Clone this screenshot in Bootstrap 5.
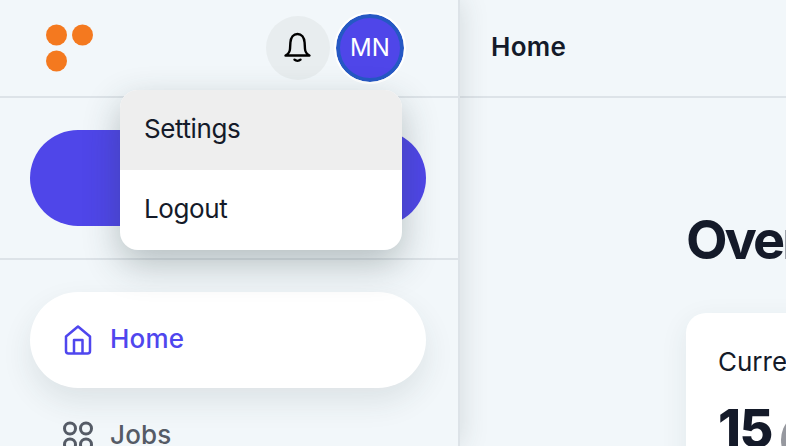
<!DOCTYPE html>
<html lang="en">
<head>
  <meta charset="UTF-8">
  <meta name="viewport" content="width=device-width, initial-scale=1.0">
  <title>Home</title>
  <link href="https://cdn.jsdelivr.net/npm/bootstrap@5.3.0/dist/css/bootstrap.min.css" rel="stylesheet">
  <style>
    html, body {
      height: 100%;
      overflow: hidden;
    }
    body {
      background-color: #f2f7fa;
      font-family: Inter, "Liberation Sans", sans-serif;
      color: #141a29;
    }
    .app-shell {
      width: 786px;
      height: 446px;
      overflow: hidden;
    }
    .side-panel {
      width: 460px;
      flex: none;
      background-color: #f2f7fa;
      border-right: 2px solid #dde3e8;
      box-shadow: 2px 0 26px rgba(40, 60, 60, 0.14);
      position: relative;
      z-index: 2;
    }
    .side-top {
      height: 98px;
      padding: 14px 54px 0 46px;
      border-bottom: 2px solid #dde3e8;
    }
    .logo-mark {
      margin-top: 10px;
    }
    .bell-btn {
      width: 64px;
      height: 64px;
      margin-top: 2px;
      background-color: #e8edef;
    }
    .avatar-btn {
      width: 68px;
      height: 68px;
      margin-left: 6px;
      font-size: 24px;
      color: #fff;
      background-color: #4f46e9;
      border: 4px solid #2558c4;
      outline: 2px solid #fff;
      padding: 0;
    }
    .avatar-btn:hover, .avatar-btn:focus {
      color: #fff;
      background-color: #4f46e9;
      border-color: #2558c4;
    }
    .profile-menu {
      position: absolute;
      top: 90px;
      left: 120px;
      width: 282px;
      padding: 0;
      border: 0;
      border-radius: 18px;
      overflow: hidden;
      box-shadow: 0 14px 36px rgba(40, 60, 60, 0.3);
      z-index: 5;
    }
    .profile-menu .dropdown-item {
      height: 80px;
      padding: 0 24px 4px;
      display: flex;
      align-items: center;
      font-size: 26px;
      letter-spacing: -0.4px;
      color: #141a29;
    }
    .profile-menu .dropdown-item.is-hover {
      background-color: #eeeeee;
    }
    .action-zone {
      height: 162px;
      padding: 32px 32px 0 30px;
      border-bottom: 2px solid #dde3e8;
    }
    .post-btn {
      height: 96px;
      width: 100%;
      border-radius: 48px;
      background-color: #4f46e9;
      border: 0;
    }
    .side-links {
      padding: 32px 32px 0 30px;
    }
    .side-link {
      height: 96px;
      padding: 0 32px;
      border-radius: 48px;
      font-size: 26px;
      font-weight: 500;
      letter-spacing: 0.2px;
      gap: 16px;
      color: #555b66;
      text-decoration: none;
    }
    .side-link svg {
      flex: none;
    }
    .link-text {
      margin-bottom: 4px;
    }
    .side-link.is-active {
      background-color: #fff;
      color: #4f46ee;
      box-shadow: 0 14px 30px rgba(40, 60, 60, 0.1);
    }
    .page-top {
      height: 98px;
      padding: 0 0 4px 31px;
      border-bottom: 2px solid #dde3e8;
      font-size: 26px;
      font-weight: 600;
      letter-spacing: 0.3px;
    }
    .page-body {
      padding: 112px 0 0 226px;
    }
    .page-title {
      font-size: 54px;
      font-weight: 700;
      letter-spacing: -3px;
      line-height: 60px;
      margin: 0 0 43px 0;
      white-space: nowrap;
    }
    .stat-box {
      width: 400px;
      border: 0;
      border-radius: 20px;
      padding: 31px 32px;
      box-shadow: 0 8px 28px rgba(40, 60, 60, 0.08);
    }
    .stat-label {
      font-size: 26px;
      line-height: 36px;
      white-space: nowrap;
    }
    .stat-value {
      font-size: 52px;
      font-weight: 800;
      line-height: 60px;
      letter-spacing: -1.5px;
      margin-top: 19px;
      gap: 9px;
    }
    .stat-chip {
      width: 60px;
      height: 60px;
      flex: none;
      margin-top: 11px;
      background-color: #96989f;
    }
  </style>
</head>
<body>

  <div class="app-shell d-flex">

    <!-- Sidebar -->
    <div class="side-panel">
      <div class="side-top d-flex justify-content-between">
        <svg class="logo-mark" width="48" height="48" viewBox="0 0 48 48" fill="#f4791f">
          <circle cx="10.5" cy="11" r="10.5"/>
          <circle cx="36.5" cy="11" r="10.5"/>
          <circle cx="10.5" cy="37" r="10.5"/>
        </svg>
        <div class="d-flex align-items-start">
          <button class="btn bell-btn rounded-circle d-flex align-items-center justify-content-center p-0" type="button">
            <svg width="30" height="32" viewBox="0 0 30 32" fill="none" stroke="#000" stroke-width="2.4" stroke-linecap="round" stroke-linejoin="round">
              <path d="M2.500 23.500c3-1.500 4.300-3.500 4.500-6.500l.4-6.500C7.800 5.500 10.500 2 14.500 2s6.700 3.500 7.100 8.500l.4 6.500c.2 3 1.500 5 4.500 6.500z"/>
              <path d="M11.500 27.700c1.500 1.500 4.500 1.500 6 0"/>
            </svg>
          </button>
          <button class="btn avatar-btn rounded-circle" type="button">MN</button>
        </div>
      </div>

      <div class="dropdown-menu show profile-menu">
        <a class="dropdown-item is-hover" href="#">Settings</a>
        <a class="dropdown-item" href="#">Logout</a>
      </div>

      <div class="action-zone">
        <button class="btn post-btn" type="button"></button>
      </div>

      <div class="side-links">
        <a class="side-link is-active d-flex align-items-center" href="#">
          <svg width="32" height="32" viewBox="0 0 32 32" fill="none" stroke="currentColor" stroke-width="2.500" stroke-linejoin="round">
            <path d="M4 12.500 16 2.500l12 10V27a2.500 2.500 0 0 1-2.500 2.500h-19A2.500 2.500 0 0 1 4 27z"/>
            <path d="M12 29.500V16h8.500v13.500"/>
          </svg>
          <span class="link-text">Home</span>
        </a>
        <a class="side-link d-flex align-items-center" href="#">
          <svg width="32" height="32" viewBox="0 0 32 32" fill="none" stroke="currentColor" stroke-width="3">
            <circle cx="8" cy="8.500" r="5.500"/>
            <circle cx="24" cy="8.500" r="5.500"/>
            <circle cx="8" cy="24.500" r="5.500"/>
            <circle cx="24" cy="24.500" r="5.500"/>
          </svg>
          <span class="link-text">Jobs</span>
        </a>
      </div>
    </div>

    <!-- Main -->
    <div class="flex-grow-1">
      <div class="page-top d-flex align-items-center">Home</div>
      <div class="page-body">
        <h1 class="page-title">Overview</h1>
        <div class="card stat-box">
          <div class="stat-label">Current jobs</div>
          <div class="stat-value d-flex align-items-start">15 <span class="stat-chip rounded-circle d-inline-block"></span></div>
        </div>
      </div>
    </div>

  </div>

  <script src="https://cdn.jsdelivr.net/npm/bootstrap@5.3.0/dist/js/bootstrap.bundle.min.js"></script>
</body>
</html>
